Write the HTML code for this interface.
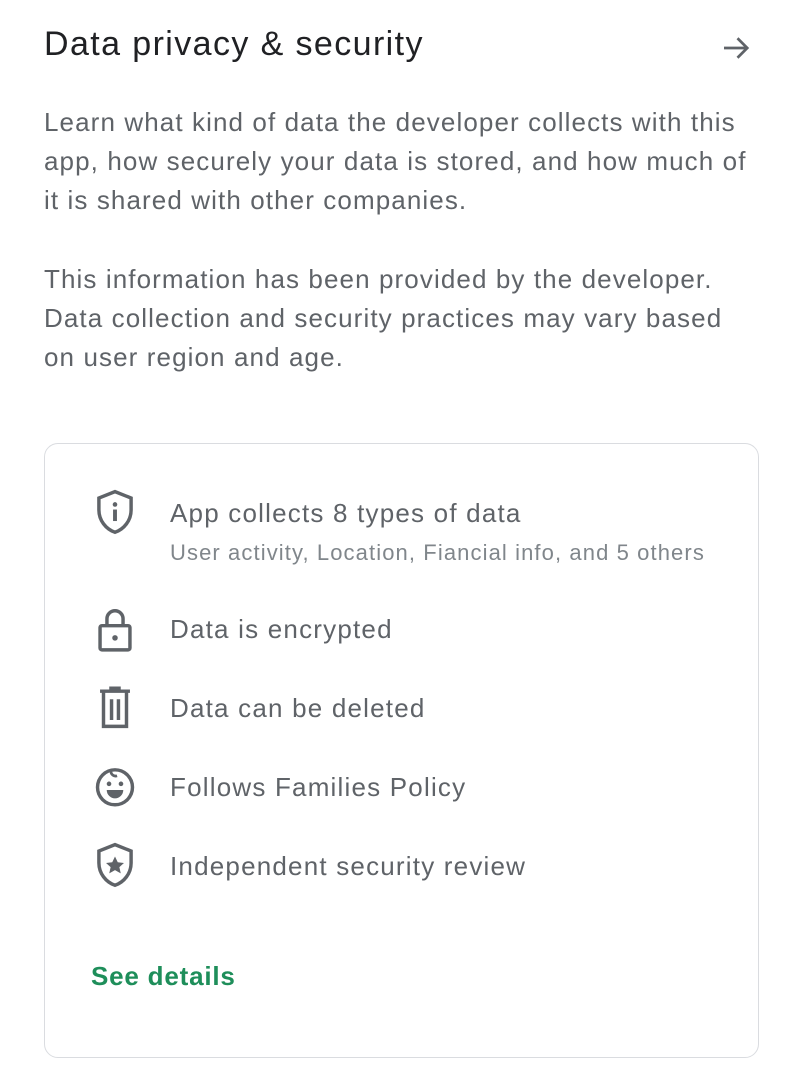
<!DOCTYPE html>
<html><head><style>
body{margin:0;background:#fff;width:802px;height:1082px;overflow:hidden;font-family:"Liberation Sans",sans-serif;position:relative}
.a{position:absolute;white-space:nowrap}
h1{position:absolute;left:44px;top:25px;margin:0;font-size:34px;font-weight:normal;color:#202124;letter-spacing:1.4px}
.p{position:absolute;left:44px;font-size:26px;line-height:39px;color:#5f6368;letter-spacing:1.1px;white-space:nowrap}
.card{position:absolute;left:44px;top:443px;width:715px;height:615px;border:1.5px solid #dadce0;border-radius:14px;box-sizing:border-box}
.it{position:absolute;left:170px;font-size:26px;color:#5f6368;letter-spacing:1.2px;white-space:nowrap}
.ic{position:absolute;left:92px;width:46px;height:48.3px}
</style></head><body>
<h1>Data privacy &amp; security</h1>
<svg class="a" style="left:718px;top:30px" width="36" height="36" viewBox="0 0 24 24"><path d="M4 12h15M13 5.5l6.5 6.5-6.5 6.5" fill="none" stroke="#5f6368" stroke-width="1.8"/></svg>
<div class="p" style="top:103px">Learn what kind of data the developer collects with this<br>app, how securely your data is stored, and how much of<br>it is shared with other companies.</div>
<div class="p" style="top:260px">This information has been provided by the developer.<br>Data collection and security practices may vary based<br>on user region and age.</div>
<div class="card"></div>
<svg class="ic" style="top:487px" viewBox="2 1 20 21"><path d="M12 3l7 2.8v5.2c0 4.5-3 8.3-7 9.7C8 19.3 5 15.5 5 11V5.8z" fill="none" stroke="#5f6368" stroke-width="1.5"/><circle cx="12" cy="8.6" r="1" fill="#5f6368"/><path d="M12 10.8v5" stroke="#5f6368" stroke-width="1.7"/></svg>
<div class="it" style="top:498px">App collects 8 types of data</div>
<div class="a" style="left:170px;top:540px;font-size:22px;color:#80868b;letter-spacing:1.1px">User activity, Location, Fiancial info, and 5 others</div>
<svg class="ic" style="top:605px" viewBox="2 1 20 21"><rect x="5.5" y="10" width="13" height="10.5" rx="0.8" fill="none" stroke="#5f6368" stroke-width="1.5"/><path d="M8.5 10V7a3.5 3.5 0 0 1 7 0v3" fill="none" stroke="#5f6368" stroke-width="1.5"/><circle cx="12" cy="15.3" r="1.2" fill="#5f6368"/></svg>
<div class="it" style="top:614px">Data is encrypted</div>
<svg class="ic" style="top:682px" viewBox="2 1 20 21"><path d="M5.5 5h13M9.5 3.7h5" stroke="#5f6368" stroke-width="1.5"/><path d="M7 5v15.3h10V5" fill="none" stroke="#5f6368" stroke-width="1.5"/><path d="M10.5 8.5v9M13.5 8.5v9" stroke="#5f6368" stroke-width="1.5"/></svg>
<div class="it" style="top:693px">Data can be deleted</div>
<svg class="ic" style="top:762px" viewBox="2 1 20 21"><circle cx="12" cy="12" r="7.6" fill="none" stroke="#5f6368" stroke-width="1.5"/><path d="M10.2 4.8c0 1.8 1.4 2.6 2.7 2.2" fill="none" stroke="#5f6368" stroke-width="1.2"/><circle cx="9.4" cy="10.5" r="1" fill="#5f6368"/><circle cx="14.6" cy="10.5" r="1" fill="#5f6368"/><path d="M8.4 13.2h7.2a3.6 3.6 0 0 1-7.2 0z" fill="#5f6368"/></svg>
<div class="it" style="top:772px">Follows Families Policy</div>
<svg class="ic" style="top:840px" viewBox="2 1 20 21"><path d="M12 3l7 2.8v5.2c0 4.5-3 8.3-7 9.7C8 19.3 5 15.5 5 11V5.8z" fill="none" stroke="#5f6368" stroke-width="1.5"/><path d="M12 8.2l1.2 2.5 2.7.3-2 1.8.6 2.7L12 14.1l-2.5 1.4.6-2.7-2-1.8 2.7-.3z" fill="#5f6368"/></svg>
<div class="it" style="top:851px">Independent security review</div>
<div class="a" style="left:91px;top:961px;font-size:26px;font-weight:bold;color:#1e8e5a;letter-spacing:0.8px">See details</div>
</body></html>
